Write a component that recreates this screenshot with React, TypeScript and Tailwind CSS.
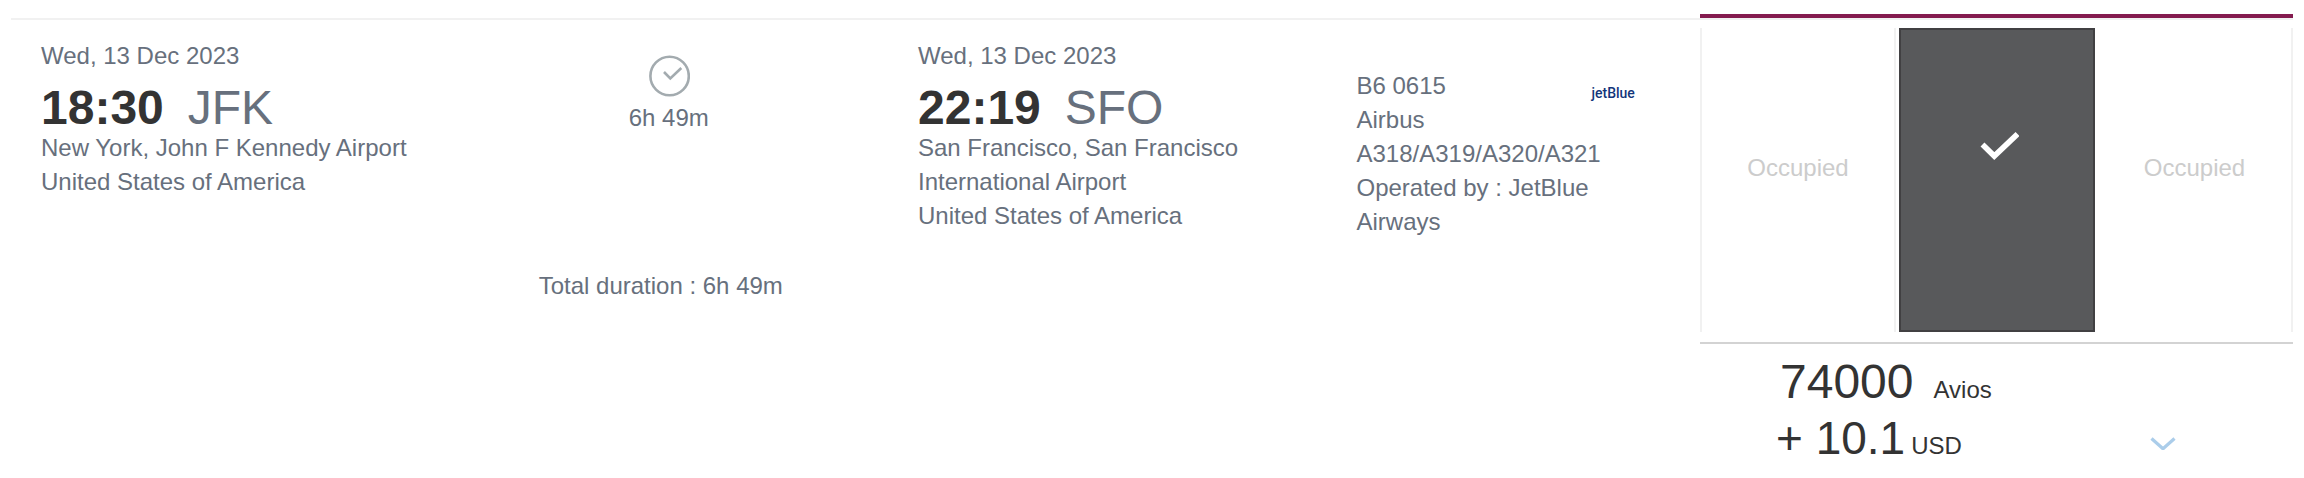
import React, { useState } from "react";

type AirportStopProps = {
  date: string;
  time: string;
  code: string;
  lines: string[];
};

function AirportStop({ date, time, code, lines }: AirportStopProps) {
  return (
    <div>
      <p>{date}</p>
      <p className="mt-3 flex gap-6 text-5xl leading-[46px]">
        <span className="font-bold text-[#333333]">{time}</span>
        <span>{code}</span>
      </p>
      {lines.map((line) => (
        <p key={line}>{line}</p>
      ))}
    </div>
  );
}

function ClockIcon() {
  return (
    <svg
      viewBox="0 0 42 42"
      className="h-[42px] w-[42px]"
      fill="none"
      stroke="#a3abaf"
      strokeWidth="2.6"
      aria-hidden="true"
    >
      <circle cx="21.6" cy="21" r="19.2" />
      <path d="M16 17 L22.3 23.5 L33.3 13" />
    </svg>
  );
}

function App() {
  const [selected, setSelected] = useState<boolean>(true);
  const [open, setOpen] = useState<boolean>(false);

  return (
    <main className="grid grid-cols-[1689fr_593fr] bg-white px-[11px] pt-3.5 font-['Liberation_Sans',Arial,sans-serif] text-2xl leading-[34px] text-[#67707d]">
      <section className="mt-1 border-t-2 border-[#f1f1f1] pt-[19px] pl-[30px]">
        <div className="grid grid-cols-[877fr_877fr_877fr_687fr]">
          <AirportStop
            date="Wed, 13 Dec 2023"
            time="18:30"
            code="JFK"
            lines={[
              "New York, John F Kennedy Airport",
              "United States of America",
            ]}
          />
          <div className="flex flex-col items-center pt-4 pr-15">
            <ClockIcon />
            <p className="mt-1">6h 49m</p>
          </div>
          <AirportStop
            date="Wed, 13 Dec 2023"
            time="22:19"
            code="SFO"
            lines={[
              "San Francisco, San Francisco",
              "International Airport",
              "United States of America",
            ]}
          />
          <div className="flex pt-[30px]">
            <div className="w-[235px] whitespace-nowrap">
              <p>B6 0615</p>
              <p>Airbus</p>
              <p>A318/A319/A320/A321</p>
              <p>Operated by : JetBlue</p>
              <p>Airways</p>
            </div>
            <span className="pt-[7px] font-['Roboto',sans-serif] text-sm leading-[34px] font-medium text-[#12357a]">
              jetBlue
            </span>
          </div>
          <p className="col-span-3 mt-[30px] pr-19 text-center">
            Total duration : 6h 49m
          </p>
        </div>
      </section>

      <section className="border-t-4 border-[#841b4f]">
        <div className="border-t-2 border-[#f1f1f1] pt-2">
          <div className="grid h-[304px] grid-cols-[196fr_196fr_195fr] gap-[3px]">
            <button
              type="button"
              disabled
              className="border-x-2 border-[#f1f1f1] pb-6 text-[#cccccc]"
            >
              Occupied
            </button>
            <button
              type="button"
              aria-label="Select fare"
              aria-pressed={selected}
              onClick={() => setSelected(!selected)}
              className="flex items-center justify-center border-2 border-[#414042] bg-[#58595b] pb-[68px]"
            >
              {selected && (
                <svg
                  viewBox="0 0 44 32"
                  className="h-8 w-11"
                  fill="none"
                  stroke="#ffffff"
                  strokeWidth="5.6"
                  aria-hidden="true"
                >
                  <path d="M7.5 14.5 L19.3 26 L42.5 4" />
                </svg>
              )}
            </button>
            <button
              type="button"
              disabled
              className="border-r-2 border-[#f1f1f1] pb-6 text-[#cccccc]"
            >
              Occupied
            </button>
          </div>
        </div>
        <div className="mt-2.5 flex items-end border-t-2 border-[#d3d3d3] pt-2.5 text-[#333333]">
          <div className="grow pl-19">
            <p className="flex items-baseline gap-5 pl-1">
              <span className="text-5xl leading-14">74000</span>
              <span>Avios</span>
            </p>
            <p className="flex items-baseline gap-1.5">
              <span className="text-[46px] leading-14">+ 10.1</span>
              <span>USD</span>
            </p>
          </div>
          <button
            type="button"
            aria-label="Show price details"
            aria-expanded={open}
            onClick={() => setOpen(!open)}
            className="mr-[117px] mb-4"
          >
            <svg
              viewBox="0 0 26 13"
              className="h-[13px] w-[26px]"
              fill="none"
              stroke="#abcdea"
              strokeWidth="3.2"
              aria-hidden="true"
            >
              <path d="M1.5 1.5 L13 11.8 L24.5 1.5" />
            </svg>
          </button>
        </div>
      </section>
    </main>
  );
}

export default App;
